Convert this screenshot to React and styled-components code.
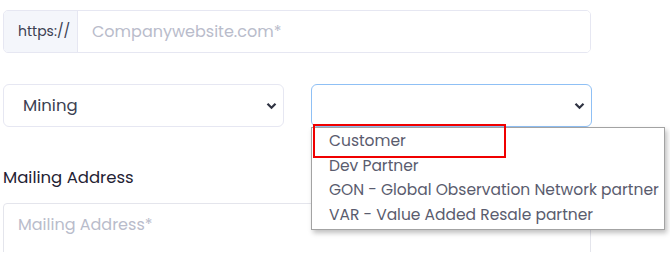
import React from "react";
import styled, { createGlobalStyle } from "styled-components";

const GlobalStyle = createGlobalStyle`
  body {
    margin: 0;
    background: #ffffff;
    font-family: "Poppins", "Inter", "Noto Sans", sans-serif;
  }
`;

const Chevron = () => (
  <svg width="11" height="8" viewBox="0 0 11 8">
    <path d="M1.5 1.8 L5.5 5.8 L9.5 1.8" fill="none" stroke="#2f3342" strokeWidth="2.2" />
  </svg>
);

const App = () => {
  const options = [
    "Customer",
    "Dev Partner",
    "GON - Global Observation Network partner",
    "VAR - Value Added Resale partner",
  ];
  return (
    <>
      <GlobalStyle />
      <Page>
        {/* website */}
        <UrlGroup>
          <Prefix>https://</Prefix>
          <UrlInput placeholder="Companywebsite.com*" />
        </UrlGroup>

        {/* industry + type */}
        <Row>
          <SelectBox>
            <SelectText>Mining</SelectText>
            <Chevron />
          </SelectBox>
          <SelectWrap>
            <SelectBox focused>
              <SelectText />
              <Chevron />
            </SelectBox>
            <Options>
              {options.map((o) => (
                <Option key={o}>{o}</Option>
              ))}
            </Options>
            <Highlight />
          </SelectWrap>
        </Row>

        {/* mailing address */}
        <Label>Mailing Address</Label>
        <AreaClip>
          <Area placeholder="Mailing Address*" />
        </AreaClip>
      </Page>
    </>
  );
};

const Page = styled.div`
  width: 588px;
  padding: 10px 0 0 3px;
`;

const UrlGroup = styled.div`
  display: flex;
  height: 43px;
  border: 1px solid #e6e7f2;
  border-radius: 5px;
  overflow: hidden;
  box-sizing: border-box;
`;

const Prefix = styled.div`
  width: 74px;
  display: flex;
  align-items: center;
  padding-left: 14px;
  box-sizing: border-box;
  background: #f4f6fb;
  border-right: 1px solid #e6e7f2;
  color: #3c3f52;
  font-size: 14px;
`;

const UrlInput = styled.input`
  flex: 1;
  border: none;
  outline: none;
  padding: 0 0 0 14px;
  font-family: inherit;
  font-size: 16px;
  color: #3c3f52;
  &::placeholder {
    color: #b9bccb;
  }
`;

const Row = styled.div`
  display: grid;
  grid-template-columns: 281px 281px;
  gap: 27px;
  margin-top: 31px;
`;

const SelectWrap = styled.div`
  position: relative;
`;

const SelectBox = styled.div`
  height: 43px;
  box-sizing: border-box;
  display: flex;
  align-items: center;
  justify-content: space-between;
  padding: 0 6px 0 19px;
  border: 1px solid ${(p) => (p.focused ? "#8fc0f5" : "#e6e7f2")};
  border-radius: 6px;
  background: #fff;
`;

const SelectText = styled.span`
  font-size: 16.5px;
  color: #3c3f52;
`;

const Options = styled.ul`
  position: absolute;
  top: 43px;
  left: 0;
  width: 352px;
  margin: 0;
  padding: 1px 0 2px;
  list-style: none;
  background: #fff;
  border: 1px solid #a3a3a3;
  box-shadow: 2px 3px 5px rgba(0, 0, 0, 0.25);
  z-index: 2;
`;

const Option = styled.li`
  height: 24.5px;
  line-height: 24.5px;
  padding-left: 17px;
  font-size: 15.5px;
  color: #5a5c6e;
  white-space: nowrap;
`;

const Highlight = styled.div`
  position: absolute;
  top: 40px;
  left: 2px;
  width: 193px;
  height: 34px;
  box-sizing: border-box;
  border: 2px solid #f00000;
  z-index: 3;
`;

const Label = styled.div`
  margin-top: 38px;
  font-size: 16.5px;
  color: #1f2233;
`;

const AreaClip = styled.div`
  height: 49px;
  margin-top: 13px;
  overflow: hidden;
`;

const Area = styled.textarea`
  display: block;
  width: 588px;
  height: 90px;
  box-sizing: border-box;
  border: 1px solid #e4e5ec;
  border-radius: 4px 4px 0 0;
  padding: 8px 14px;
  resize: none;
  outline: none;
  font-family: inherit;
  font-size: 16px;
  &::placeholder {
    color: #b9bccb;
  }
`;

export default App;
